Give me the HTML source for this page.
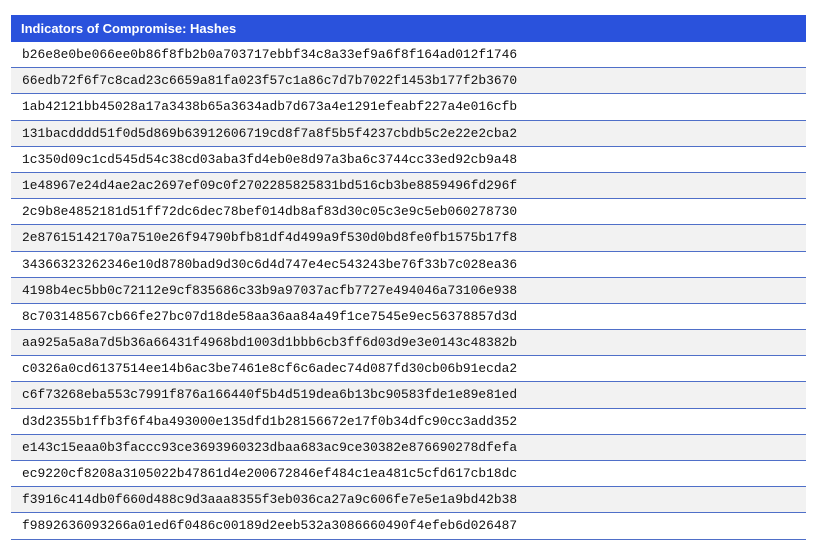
<!DOCTYPE html>
<html><head><style>
body{margin:0;background:#fff;}
.t{position:absolute;left:11px;top:15px;width:795px;}
.h{height:27px;background:#2a52dc;color:#fff;font:bold 13px "Liberation Sans",Arial,sans-serif;line-height:28px;padding-left:10px;box-sizing:border-box;}
.r{height:26.2px;box-sizing:border-box;border-bottom:1.5px solid #4f6fc8;font:12.9px "Liberation Mono",monospace;line-height:25px;padding-left:11px;color:#111;}
.r:nth-child(odd){background:#f2f2f2;}
</style></head><body><div class="t">
<div class="h">Indicators of Compromise: Hashes</div>
<div class="r">b26e8e0be066ee0b86f8fb2b0a703717ebbf34c8a33ef9a6f8f164ad012f1746</div>
<div class="r">66edb72f6f7c8cad23c6659a81fa023f57c1a86c7d7b7022f1453b177f2b3670</div>
<div class="r">1ab42121bb45028a17a3438b65a3634adb7d673a4e1291efeabf227a4e016cfb</div>
<div class="r">131bacdddd51f0d5d869b63912606719cd8f7a8f5b5f4237cbdb5c2e22e2cba2</div>
<div class="r">1c350d09c1cd545d54c38cd03aba3fd4eb0e8d97a3ba6c3744cc33ed92cb9a48</div>
<div class="r">1e48967e24d4ae2ac2697ef09c0f2702285825831bd516cb3be8859496fd296f</div>
<div class="r">2c9b8e4852181d51ff72dc6dec78bef014db8af83d30c05c3e9c5eb060278730</div>
<div class="r">2e87615142170a7510e26f94790bfb81df4d499a9f530d0bd8fe0fb1575b17f8</div>
<div class="r">34366323262346e10d8780bad9d30c6d4d747e4ec543243be76f33b7c028ea36</div>
<div class="r">4198b4ec5bb0c72112e9cf835686c33b9a97037acfb7727e494046a73106e938</div>
<div class="r">8c703148567cb66fe27bc07d18de58aa36aa84a49f1ce7545e9ec56378857d3d</div>
<div class="r">aa925a5a8a7d5b36a66431f4968bd1003d1bbb6cb3ff6d03d9e3e0143c48382b</div>
<div class="r">c0326a0cd6137514ee14b6ac3be7461e8cf6c6adec74d087fd30cb06b91ecda2</div>
<div class="r">c6f73268eba553c7991f876a166440f5b4d519dea6b13bc90583fde1e89e81ed</div>
<div class="r">d3d2355b1ffb3f6f4ba493000e135dfd1b28156672e17f0b34dfc90cc3add352</div>
<div class="r">e143c15eaa0b3faccc93ce3693960323dbaa683ac9ce30382e876690278dfefa</div>
<div class="r">ec9220cf8208a3105022b47861d4e200672846ef484c1ea481c5cfd617cb18dc</div>
<div class="r">f3916c414db0f660d488c9d3aaa8355f3eb036ca27a9c606fe7e5e1a9bd42b38</div>
<div class="r">f9892636093266a01ed6f0486c00189d2eeb532a3086660490f4efeb6d026487</div>
</div></body></html>
